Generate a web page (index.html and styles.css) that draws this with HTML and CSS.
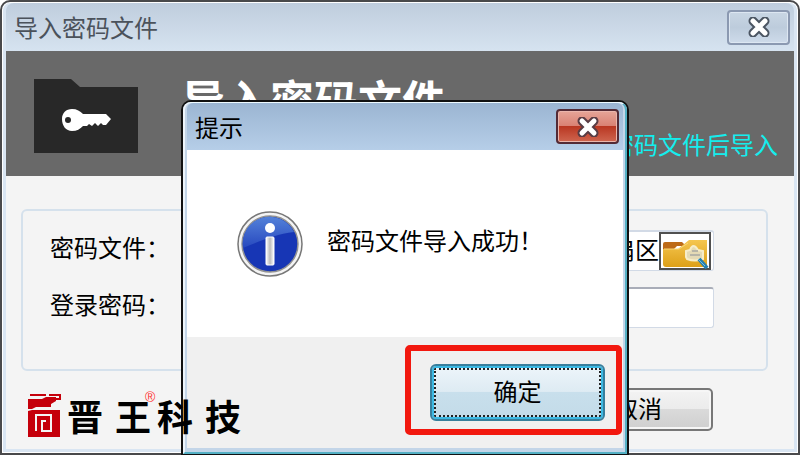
FILE: index.html
```
<!DOCTYPE html>
<html lang="zh-CN">
  <head>
    <meta charset="utf-8">
    <meta name="viewport" content="width=device-width">
    <title>导入密码文件</title>
    <link rel="stylesheet" href="styles.css">
  </head>
  <body>

    <main class="window">
      <header class="titlebar">
        <span>导入密码文件</span>
        <button class="close" type="button" aria-label="关闭">
          <svg width="24" height="20" viewBox="0 0 24 20">
            <path d="M6 4L18 16M18 4L6 16" stroke="#4b5562" stroke-width="9" stroke-linecap="round"/>
            <path d="M6 4L18 16M18 4L6 16" stroke="#fff" stroke-width="5" stroke-linecap="round"/>
          </svg>
        </button>
      </header>

      <section class="banner">
        <svg class="folder" width="104" height="74" viewBox="0 0 104 74">
          <path d="M0 0H37L46 8H104V74H0Z" fill="#282828"/>
          <path d="M28 40c0-6 4-10 10-10 5 0 8 2 11 5h23l5 5-5 6h-3l-2-2-3 3-3-3-3 3-3-2-2 2h-4c-3 3-6 5-11 5-6 0-10-5-10-12z" fill="#fff"/>
          <circle cx="34" cy="41" r="3" fill="#282828"/>
        </svg>
        <div class="banner-text">
          <h1>导入密码文件</h1>
          <p>选择密码文件后导入</p>
        </div>
      </section>

      <form class="content">
        <div class="group">
          <div class="row">
            <label for="file">密码文件：</label>
            <div class="field file-field">
              <input id="file" type="text" value="扇区">
              <button class="browse" type="button" aria-label="浏览">
                <svg width="48" height="36" viewBox="0 0 48 36">
                  <defs>
                    <linearGradient id="gold" x2="0" y2="1">
                      <stop offset="0" stop-color="#f5c650"/>
                      <stop offset="1" stop-color="#dda018"/>
                    </linearGradient>
                  </defs>
                  <path d="M2 11q0-2 2-2h17l4 4h-9l-3 3H2z" fill="#bd6b18"/>
                  <path d="M2 16h15l11-9h18v25q0 2-3 2H5q-3 0-3-3z" fill="url(#gold)"/>
                  <path d="M3 16h15l9-6" fill="none" stroke="#f9d878"/>
                  <path d="M25 24v-6l4-1q3-8 8 0l5 1v8q-8 3-16 0z" fill="#e4dab5" stroke="#f7edc8" stroke-width="2"/>
                  <path d="M29 22h10M31 18h6" stroke="#b7b5a7" stroke-width="2"/>
                  <path d="M38 26l8 9" stroke="#247fb2" stroke-width="4"/>
                  <path d="M37 26l7 7" stroke="#74bedb"/>
                </svg>
              </button>
            </div>
          </div>
          <div class="row">
            <label for="password">登录密码：</label>
            <div class="field"><input id="password" type="password"></div>
          </div>
        </div>
        <div class="actions">
          <button class="cancel" type="button">取消</button>
        </div>
      </form>
    </main>

    <section class="dialog" role="dialog" aria-labelledby="dialog-title">
      <div class="dialog-frame">
        <header class="dialog-title">
          <h2 id="dialog-title">提示</h2>
          <button class="close close-red" type="button" aria-label="关闭提示">
            <svg width="24" height="20" viewBox="0 0 24 20">
              <path d="M6 4L18 16M18 4L6 16" stroke="#583c44" stroke-width="9" stroke-linecap="round"/>
              <path d="M6 4L18 16M18 4L6 16" stroke="#fff" stroke-width="5" stroke-linecap="round"/>
            </svg>
          </button>
        </header>
        <div class="message">
          <svg width="66" height="66" viewBox="0 0 66 66">
            <defs>
              <linearGradient id="blue" x2="0" y2="1">
                <stop offset="0" stop-color="#5482d9"/>
                <stop offset="1" stop-color="#2748bf"/>
              </linearGradient>
              <linearGradient id="stem">
                <stop offset="0" stop-color="#fff"/>
                <stop offset="0.5" stop-color="#bcbcbc"/>
                <stop offset="1" stop-color="#fff"/>
              </linearGradient>
            </defs>
            <circle cx="33" cy="33" r="32" fill="#f4f4f4" stroke="#777" stroke-width="1.5"/>
            <circle cx="33" cy="33" r="28" fill="#1736b5" stroke="#929292" stroke-width="1.5"/>
            <path d="M6 37a27 27 0 0 1 51-16C38 23 24 30 6 37z" fill="url(#blue)"/>
            <circle cx="33" cy="17" r="5" fill="#fff"/>
            <rect x="29" y="26" width="8" height="28" rx="1" fill="url(#stem)" stroke="#fff"/>
          </svg>
          <p>密码文件导入成功！</p>
        </div>
        <footer class="dialog-footer">
          <div class="highlight">
            <button class="ok" type="button">确定</button>
          </div>
        </footer>
      </div>
    </section>

    <div class="brand">
      <svg width="33" height="45" viewBox="0 0 33 45">
        <path d="M0 6h14l4-2h10v4l-5 3H8L0 15zM0 18l4-1h28v27H0z" fill="#c5000b"/>
        <path d="M0 13l9-3h14v4H8l-4 2H0z" fill="#c5000b"/>
        <path d="M2 2h16M21 2h11v4h-6M20 5h5" fill="none" stroke="#c5000b" stroke-width="2"/>
        <path d="M8 38V22H23V38H14V28H18" fill="none" stroke="#f4f4f4" stroke-width="2"/>
      </svg>
      <span>晋</span><span>王</span><sup>®</sup><span>科</span><span>技</span>
    </div>

  </body>
</html>
```
FILE: styles.css
```
* {
  box-sizing: border-box;
}

body {
  margin: 0;
  position: relative;
  min-height: 100vh;
  display: flex;
  background: #fff;
  color: #000;
  font-family: "Noto Sans CJK SC", sans-serif;
  font-size: 24px;
  line-height: 32px;
}

h1, h2, p {
  margin: 0;
  font-weight: normal;
}

button, input {
  font: inherit;
  color: inherit;
  margin: 0;
}

/* main window */
.window {
  flex: 1;
  display: flex;
  flex-direction: column;
  border: 2px solid #49494b;
  border-radius: 10px 10px 0 0;
  padding: 1px 4px 4px;
  background: #d9e5f2;
  box-shadow: inset 0 0 0 1px #fff;
}

.titlebar {
  display: flex;
  justify-content: space-between;
  align-items: center;
  height: 48px;
  padding: 0 4px 0 8px;
  border-radius: 8px 8px 0 0;
  background: linear-gradient(#bfcddd, #d6e3f0);
  color: #4b525b;
}

.close {
  display: flex;
  justify-content: center;
  align-items: center;
  width: 63px;
  height: 35px;
  padding: 0;
  border: 2px solid #8b99b1;
  border-radius: 4px;
  background: linear-gradient(#c9d6e4, #bdccdc 50%, #cedbea);
  box-shadow: inset 0 0 0 1px #dde7f2;
}

.banner {
  display: flex;
  justify-content: space-between;
  height: 125px;
  padding: 28px 16px 0 28px;
  background: #696969;
}

.banner-text {
  display: flex;
  flex-direction: column;
  justify-content: space-between;
  flex: 1;
  padding: 0 0 16px 44px;
}

h1 {
  margin-top: -8px;
  font-size: 44px;
  line-height: 56px;
  font-weight: bold;
  color: #fff;
}

.banner-text p {
  color: #14eeee;
  text-align: right;
}

.content {
  flex: 1;
  padding: 33px 26px 16px 15px;
  background: #f4f4f4;
}

.group {
  display: flex;
  flex-direction: column;
  gap: 16px;
  height: 162px;
  padding: 19px 52px 0 27px;
  border: 2px solid #d5e1ec;
  border-radius: 6px;
}

.row {
  display: flex;
  align-items: center;
  gap: 16px;
}

.row label {
  padding-bottom: 8px;
}

.field {
  flex: 1;
  display: flex;
  height: 41px;
  border: 1px solid #d2dae6;
  border-top: 2px solid #a9adb8;
  border-radius: 3px;
  background: #fff;
}

.field input {
  flex: 1;
  min-width: 0;
  padding: 0 0 4px;
  border: 0;
  background: none;
}

.file-field {
  padding-right: 2px;
  border-color: #d2dae6;
}

.file-field input {
  text-align: right;
}

.browse {
  display: flex;
  justify-content: center;
  align-items: center;
  width: 52px;
  padding: 0;
  border: 2px solid #505050;
  background: #fff;
}

.actions {
  display: flex;
  justify-content: flex-end;
  padding: 17px 55px 0 0;
}

.cancel {
  width: 150px;
  height: 43px;
  padding: 0 0 4px;
  border: 2px solid #777;
  border-radius: 5px;
  background: linear-gradient(#f3f3f3, #ebebeb 50%, #dadada 50%, #cfcfcf);
  box-shadow: inset 0 0 0 2px #f6f6f6;
}

/* message dialog, lies over the window */
.dialog {
  position: absolute;
  top: 100px;
  right: 171px;
  bottom: 0;
  left: 181px;
  display: flex;
  border: 2px solid #111;
  border-bottom-width: 1px;
  border-radius: 10px 10px 0 0;
  background: #c3d5e8;
}

.dialog-frame {
  flex: 1;
  display: flex;
  flex-direction: column;
  padding: 0 2px 4px;
  border: 2px solid #54b0c4;
  border-top: 1px solid #eefaff;
  border-left-color: #eef5fb;
  border-radius: 8px 8px 0 0;
}

.dialog-title {
  display: flex;
  justify-content: space-between;
  align-items: center;
  height: 47px;
  padding: 0 4px 0 8px;
  border-radius: 6px 6px 0 0;
  background: linear-gradient(#9bb5d2, #b6cee8);
}

h2 {
  font-size: 24px;
}

.close-red {
  border-color: #532a35;
  background: linear-gradient(#e6a598, #d98173 48%, #b93722 50%, #cf6650);
  box-shadow: inset 0 0 0 1px #eab5ac;
}

.message {
  display: flex;
  align-items: center;
  gap: 24px;
  height: 187px;
  padding: 0 50px;
  background: #fff;
}

.message p {
  padding-bottom: 8px;
}

.dialog-footer {
  flex: 1;
  display: flex;
  justify-content: flex-end;
  align-items: flex-start;
  padding: 8px 1px 0;
  background: #f0f0f0;
}

/* red frame around the button to press */
.highlight {
  padding: 13px 11px 8px 19px;
  border: 6px solid #f2180f;
  border-radius: 5px;
}

.ok {
  display: block;
  width: 175px;
  height: 57px;
  padding: 0 0 4px;
  border: 2px solid #397f9c;
  border-radius: 6px;
  outline: 2px dotted #222;
  outline-offset: -6px;
  background: linear-gradient(#edf5fa, #deebf3 48%, #c8dfec 50%, #c3dbe8);
  box-shadow: inset 0 0 0 2px #3cb9e3;
}

/* watermark on top of everything */
.brand {
  position: absolute;
  bottom: 17px;
  left: 28px;
  display: flex;
  align-items: center;
  gap: 6px;
  font-size: 36px;
  line-height: 45px;
  font-weight: bold;
}

.brand span + span {
  margin-left: 6px;
}

.brand sup {
  align-self: flex-start;
  width: 12px;
  margin: -8px -6px 0 -12px;
  color: #f33;
  font-family: "Liberation Sans", sans-serif;
  font-size: 14px;
  line-height: 24px;
  font-weight: normal;
}
```
